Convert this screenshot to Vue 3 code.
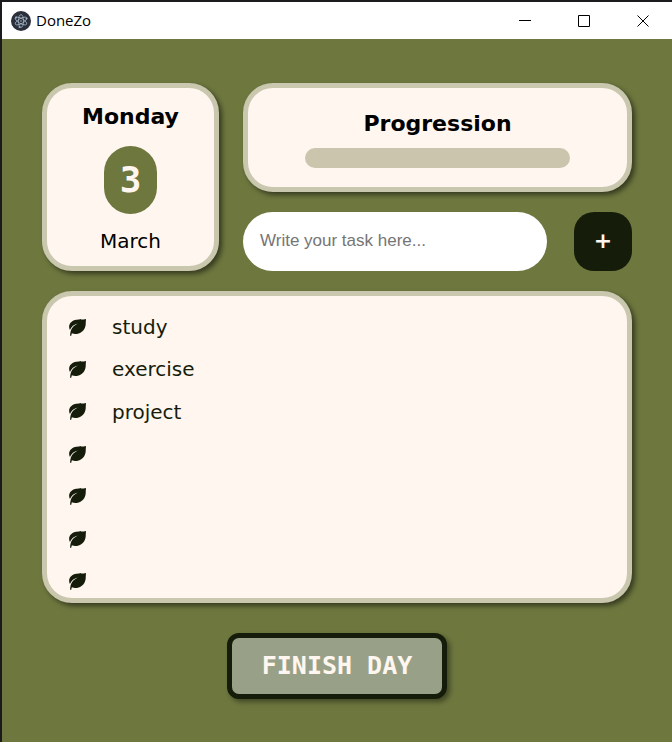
<script setup>
import { ref } from 'vue'

const rows = ref(['study', 'exercise', 'project', '', '', '', ''])
const draft = ref('')

function addTask() {
  const text = draft.value.trim()
  if (!text) return
  const free = rows.value.indexOf('')
  if (free >= 0) rows.value[free] = text
  else rows.value.push(text)
  draft.value = ''
}

function finishDay() {
  rows.value = rows.value.map(() => '')
}
</script>

<template>
  <div class="window">
    <header class="titlebar">
      <svg class="logo" viewBox="0 0 40 40" aria-hidden="true">
        <circle cx="20" cy="20" r="20" fill="#2b2e3b" />
        <g fill="none" stroke="#9fb4c4" stroke-width="1.6">
          <ellipse cx="20" cy="20" rx="13" ry="5" transform="rotate(30 20 20)" />
          <ellipse cx="20" cy="20" rx="13" ry="5" transform="rotate(90 20 20)" />
          <ellipse cx="20" cy="20" rx="13" ry="5" transform="rotate(150 20 20)" />
        </g>
        <g fill="#9fb4c4">
          <circle cx="20" cy="20" r="1.6" />
          <circle cx="10" cy="13" r="2" />
          <circle cx="31" cy="15" r="2" />
          <circle cx="17" cy="32" r="2" />
        </g>
      </svg>
      <span class="app-name">DoneZo</span>
      <div class="controls">
        <button type="button" aria-label="Minimize">
          <svg viewBox="0 0 12 12"><path d="M0 5.5H12" /></svg>
        </button>
        <button type="button" aria-label="Maximize">
          <svg viewBox="0 0 12 12"><path d="M.5 .5H11.5V11.5H.5Z" /></svg>
        </button>
        <button type="button" aria-label="Close">
          <svg viewBox="0 0 12 12"><path d="M.5 .5L11.5 11.5M11.5 .5L.5 11.5" /></svg>
        </button>
      </div>
    </header>

    <main class="board">
      <div class="top">
        <section class="card date">
          <h2>Monday</h2>
          <div class="day">3</div>
          <p>March</p>
        </section>
        <div class="side">
          <section class="card progress">
            <h2>Progression</h2>
            <div class="track" role="progressbar" aria-valuenow="0" aria-valuemin="0" aria-valuemax="100" aria-label="Progression"></div>
          </section>
          <form class="entry" @submit.prevent="addTask">
            <input v-model="draft" type="text" placeholder="Write your task here..." aria-label="Task" />
            <button type="submit" aria-label="Add task">+</button>
          </form>
        </div>
      </div>

      <ul class="card tasks">
        <li v-for="(task, i) in rows" :key="i">
          <svg viewBox="0 0 16 16" aria-hidden="true">
            <path class="blade" d="M16 0C13 .8 10 .3 7 .7C3 1.2 .1 4 .1 7.2C.1 8.3 .4 9.4 .9 10.3C2.2 7.2 4.6 5 8.3 4.2C5 5.8 2.6 8 1.7 11C1.2 12.8 1 14.2 1.1 15.6C1.2 16.1 2.1 16.1 2.2 15.6C2.3 14.8 2.4 14.2 2.7 13.3C4.2 14 6.3 14.2 8.3 13.8C12.6 12.9 15.3 9.5 15.7 5.2C15.8 3.5 15.8 1.8 16 0Z" />
          </svg>
          <span>{{ task }}</span>
        </li>
      </ul>

      <button class="finish" type="button" @click="finishDay">FINISH DAY</button>
    </main>
  </div>
</template>

<style>
body {
  background: #1b1a1c;
}
</style>

<style scoped>
.window {
  box-sizing: border-box;
  min-height: 100vh;
  padding: 2px 0 0 2px;
  display: flex;
  flex-direction: column;
  font-family: "DejaVu Sans", sans-serif;
  color: #000;
}

.titlebar {
  display: flex;
  align-items: center;
  height: 37px;
  padding-left: 9px;
  background: #fff;
}

.logo {
  width: 20px;
  height: 20px;
  margin-right: 5px;
}

.app-name {
  padding-bottom: 2px;
  font: 15px "Open Sans", sans-serif;
}

.controls {
  display: flex;
  align-self: stretch;
  margin-left: auto;
}

.controls button {
  display: flex;
  align-items: center;
  justify-content: center;
  width: 59px;
  padding: 0;
  border: 0;
  background: none;
}

.controls svg {
  width: 12px;
  height: 12px;
  fill: none;
  stroke: #000;
  stroke-width: 1;
}

.board {
  flex: 1;
  display: flex;
  flex-direction: column;
  padding: 44px 40px;
  background: #6d773e;
}

.top {
  display: flex;
  gap: 24px;
  margin-bottom: 20px;
}

.card {
  box-sizing: border-box;
  border: 5px solid #c9c7ae;
  border-radius: 30px;
  background: #fff6f0;
  box-shadow: 3px 3px 5px rgba(0, 0, 0, 0.5);
}

h2,
p {
  margin: 0;
  font-weight: 400;
  text-align: center;
}

h2 {
  font-size: 22px;
  font-weight: 700;
  line-height: 28px;
}

.date {
  display: flex;
  flex-direction: column;
  align-items: center;
  width: 30%;
  height: 188px;
  padding-top: 15px;
}

.date p {
  font-size: 20px;
  line-height: 24px;
}

.day {
  margin: 15px 0;
  padding: 0 16px;
  border-radius: 27px;
  background: #6d773e;
  color: #fff6f0;
  font: 700 36px/68px "DejaVu Sans Mono", monospace;
}

.side {
  flex: 1;
  min-width: 0;
  display: flex;
  flex-direction: column;
  justify-content: space-between;
}

.progress {
  display: flex;
  flex-direction: column;
  align-items: center;
  height: 109px;
  padding-top: 22px;
}

.track {
  width: 70%;
  height: 20px;
  margin-top: 10px;
  border-radius: 10px;
  background: #cbc5ae;
}

.entry {
  display: flex;
  gap: 27px;
  height: 59px;
}

.entry input {
  flex: 1;
  min-width: 0;
  padding: 0 17px 2px;
  border: 0;
  border-radius: 30px;
  background: #fff;
  font: 17px "Liberation Sans", sans-serif;
}

.entry input::placeholder {
  color: #757575;
}

.entry button {
  width: 58px;
  padding: 0 0 2px;
  border: 0;
  border-radius: 20px;
  background: #151d0a;
  color: #fff6f0;
  font: 700 22px "DejaVu Sans", sans-serif;
}

.tasks {
  display: grid;
  grid-auto-rows: 1fr;
  height: 312px;
  margin: 0;
  padding: 5px 22px 0;
  list-style: none;
  overflow: hidden;
}

.tasks li {
  display: flex;
  align-items: center;
  align-self: start;
  gap: 26px;
  height: 24px;
  padding-top: 14px;
  color: #151d0a;
  font-size: 20px;
  line-height: 24px;
}

.tasks svg {
  width: 17px;
  height: 17px;
}

.blade {
  fill: #151d0a;
}

.finish {
  align-self: center;
  margin-top: 30px;
  padding: 0 30px;
  border: 5px solid #151d0a;
  border-radius: 12px;
  background: #98a187;
  color: #fff6f0;
  box-shadow: 3px 3px 5px rgba(0, 0, 0, 0.4);
  font: 700 25px/56px "DejaVu Sans Mono", monospace;
}
</style>
